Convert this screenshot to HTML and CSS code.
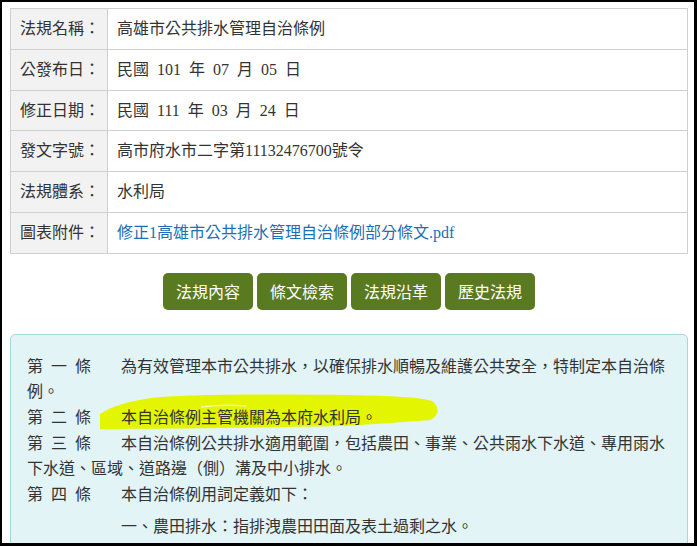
FILE: index.html
```html
<!DOCTYPE html>
<html lang="zh-TW">
<head>
    <meta charset="UTF-8">
    <meta name="viewport" content="width=device-width, initial-scale=1.0">
    <title>高雄市公共排水管理自治條例</title>
    <link rel="stylesheet" href="styles.css">
</head>
<body>
    <div class="frame">
        <!-- 法規基本資料 -->
        <table class="info">
            <tr><th>法規名稱：</th><td>高雄市公共排水管理自治條例</td></tr>
            <tr><th>公發布日：</th><td>民國 101 年 07 月 05 日</td></tr>
            <tr><th>修正日期：</th><td>民國 111 年 03 月 24 日</td></tr>
            <tr><th>發文字號：</th><td>高市府水市二字第11132476700號令</td></tr>
            <tr><th>法規體系：</th><td>水利局</td></tr>
            <tr><th>圖表附件：</th><td><a href="#">修正1高雄市公共排水管理自治條例部分條文.pdf</a></td></tr>
        </table>

        <!-- 功能按鈕 -->
        <div class="tabs">
            <a class="tab" href="#">法規內容</a>
            <a class="tab" href="#">條文檢索</a>
            <a class="tab" href="#">法規沿革</a>
            <a class="tab" href="#">歷史法規</a>
        </div>

        <!-- 條文內容 -->
        <div class="law">
            <svg class="marker" width="440" height="100" viewBox="0 0 440 100">
                <path d="M89,94 L89,79 C99,72 119,65 149,62 C189,59 269,59 339,60 C379,61 409,62 421,66 C429,71 428,82 419,85 C389,87 369,89 329,91 C239,93 139,94 89,94 Z" fill="#e4f500"/>
                <path d="M190,72 C205,70 220,70 235,71" stroke="#f3fb9a" stroke-width="1.5" fill="none"/>
            </svg>
            <p class="article"><span class="no">第 一 條</span>為有效管理本市公共排水，以確保排水順暢及維護公共安全，特制定本自治條例。</p>
            <p class="article"><span class="no">第 二 條</span>本自治條例主管機關為本府水利局。</p>
            <p class="article"><span class="no">第 三 條</span>本自治條例公共排水適用範圍，包括農田、事業、公共雨水下水道、專用雨水下水道、區域、道路邊（側）溝及中小排水。</p>
            <p class="article"><span class="no">第 四 條</span>本自治條例用詞定義如下：</p>
            <p class="item">一、農田排水：指排洩農田田面及表土過剩之水。</p>
        </div>
    </div>
</body>
</html>
```

FILE: styles.css
```css
* {
    box-sizing: border-box;
}

/* 頁面與外框 */
body {
    margin: 0;
    background-color: #ffffff;
    font-family: "Liberation Serif", "Noto Sans CJK TC", serif;
    color: #333;
}

.frame {
    height: 546px;
    border-style: solid;
    border-color: #000;
    border-width: 2px 3px 3px 2px;
    padding: 6px 6px 0 8px;
    overflow: hidden;
}

/* 基本資料表格 */
.info {
    width: 678px;
    border-collapse: collapse;
    font-size: 16px;
}

.info th,
.info td {
    border: 1px solid #cfcfcf;
    padding: 8px 9px;
    line-height: 23.8px;
    text-align: left;
    font-weight: normal;
    word-spacing: 4px;
    white-space: nowrap;
}

.info th {
    width: 97px;
    background-color: #f2f2f2;
    padding-right: 7px;
}

.info a {
    color: #1a6fb6;
    text-decoration: none;
}

/* 功能按鈕 */
.tabs {
    display: flex;
    justify-content: center;
    gap: 4px;
    margin: 19px 0 24px;
}

.tab {
    width: 90px;
    height: 37px;
    line-height: 37px;
    text-align: center;
    background-color: #5a7a22;
    color: #fff;
    border-radius: 5px;
    font-family: "Noto Sans CJK TC", sans-serif;
    font-size: 16px;
    text-decoration: none;
}

/* 條文區塊 */
.law {
    position: relative;
    width: 678px;
    height: 240px;
    background-color: #e2f4f6;
    border: 1px solid #a8d8d8;
    border-radius: 5px;
    padding: 19px 15px 0 16px;
    font-size: 16px;
    line-height: 25.6px;
    word-spacing: 4px;
}

.marker {
    position: absolute;
    left: 0;
    top: 0;
    z-index: 0;
}

.article,
.item {
    position: relative;
    z-index: 1;
    margin: 0;
}

.no {
    margin-right: 30px;
}

.item {
    margin-top: 7px;
    padding-left: 94px;
}
```
